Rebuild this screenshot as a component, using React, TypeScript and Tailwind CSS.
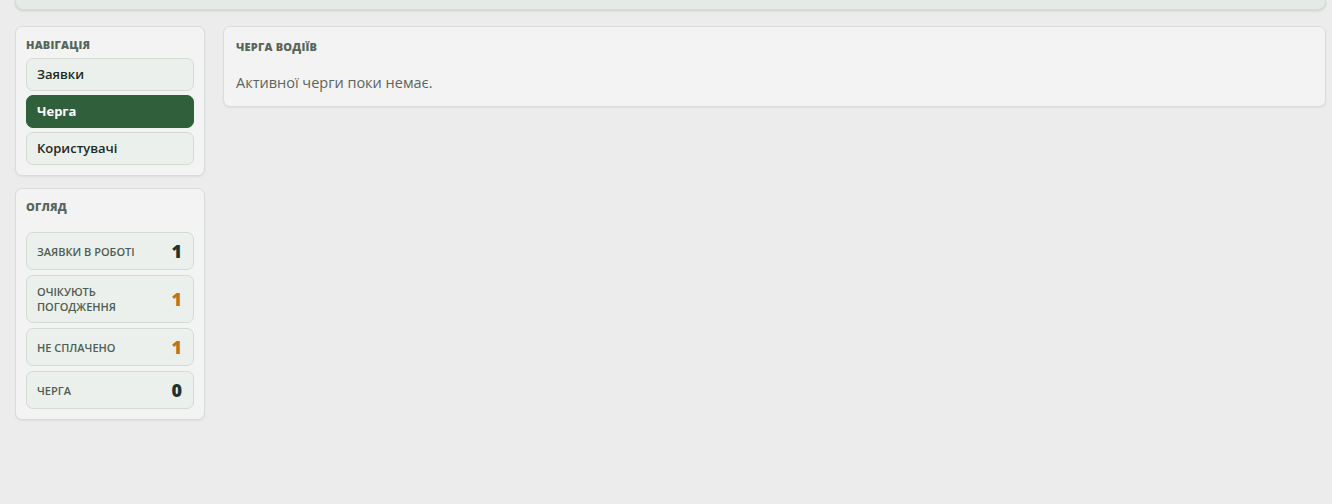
import React from "react";

type Stat = { label: string; value: number; tone: "dark" | "warn" };

const stats: Stat[] = [
  { label: "Заявки в роботі", value: 1, tone: "dark" },
  { label: "Очікують погодження", value: 1, tone: "warn" },
  { label: "Не сплачено", value: 1, tone: "warn" },
  { label: "Черга", value: 0, tone: "dark" },
];

const navItems = [
  { label: "Заявки", active: false },
  { label: "Черга", active: true },
  { label: "Користувачі", active: false },
];

export default function App() {
  return (
    <div
      className="min-h-[504px] bg-[#ececec] pl-[15px] pr-[6px] text-[#1f2b23]"
      style={{ fontFamily: '"Open Sans", "Noto Sans", sans-serif' }}
    >
      {/* header strip (scrolled out of view) */}
      <div className="h-[10px] rounded-b-[8px] border border-t-0 border-[#d3dcd5] bg-[#e4eae5] shadow-sm" />

      <div className="mt-[16px] flex items-start gap-[18px]">
        <aside className="flex w-[190px] shrink-0 flex-col gap-[12px]">
          <section className="rounded-[7px] border border-[#d7ddd8] bg-[#f3f3f3] px-[10px] pb-[10px] pt-[11px] shadow-[0_1px_2px_rgba(0,0,0,0.06)]">
            <h2 className="text-[11px] font-extrabold uppercase leading-[14px] tracking-[0.2px] text-[#56665b]">
              Навігація
            </h2>
            <nav className="mt-[6px] flex flex-col gap-[4px]">
              {navItems.map((item) =>
                item.active ? (
                  <div
                    key={item.label}
                    className="flex h-[33px] items-center rounded-[7px] border border-[#2f5f3b] bg-[#30603b] px-[10px] text-[13px] font-bold text-white"
                  >
                    {item.label}
                  </div>
                ) : (
                  <div
                    key={item.label}
                    className="flex h-[33px] items-center rounded-[7px] border border-[#d3dbd4] bg-[#ecf0ec] px-[10px] text-[13px] font-semibold text-[#1d2a22]"
                  >
                    {item.label}
                  </div>
                )
              )}
            </nav>
          </section>

          <section className="rounded-[7px] border border-[#d7ddd8] bg-[#f3f3f3] px-[10px] pb-[10px] pt-[11px] shadow-[0_1px_2px_rgba(0,0,0,0.06)]">
            <h2 className="text-[11px] font-extrabold uppercase leading-[14px] tracking-[0.2px] text-[#56665b]">
              Огляд
            </h2>
            <div className="mt-[18px] flex flex-col gap-[5px]">
              {stats.map((s) => (
                <div
                  key={s.label}
                  className="flex min-h-[38px] items-center justify-between gap-2 rounded-[7px] border border-[#d3dbd4] bg-[#ecf0ec] py-[8px] pl-[10px] pr-[11px]"
                >
                  <span className="max-w-[112px] text-[11px] font-semibold uppercase leading-[15px] text-[#4e5d53]">
                    {s.label}
                  </span>
                  <span
                    className={
                      s.tone === "warn"
                        ? "text-[18px] font-extrabold leading-none text-[#b9741c]"
                        : "text-[18px] font-extrabold leading-none text-[#1d3530]"
                    }
                  >
                    {s.value}
                  </span>
                </div>
              ))}
            </div>
          </section>
        </aside>

        <main className="flex-1 rounded-[7px] border border-[#d7ddd8] bg-[#f3f3f3] px-[12px] pb-[13px] pt-[13px] shadow-[0_1px_2px_rgba(0,0,0,0.06)]">
          <h2 className="text-[11px] font-extrabold uppercase leading-[14px] tracking-[0.2px] text-[#56665b]">
            Черга водіїв
          </h2>
          <p className="mt-[19px] text-[14.5px] leading-[20px] text-[#5a665e]">
            Активної черги поки немає.
          </p>
        </main>
      </div>
    </div>
  );
}
